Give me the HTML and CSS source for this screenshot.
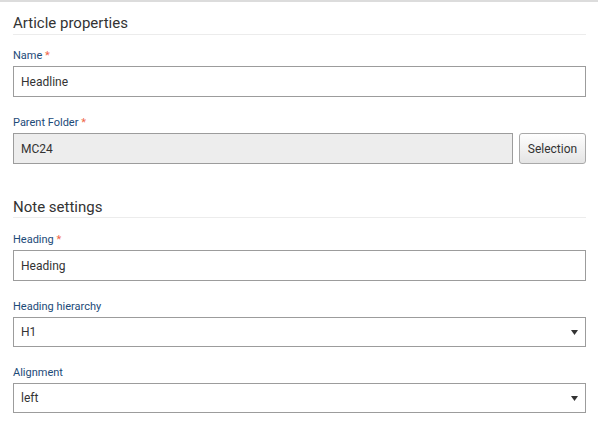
FILE: index.html
```html
<!DOCTYPE html>
<html lang="en">
<head>
<meta charset="utf-8">
<title>Article properties</title>
<link rel="stylesheet" href="styles.css">
</head>
<body>
<div class="page">
  <h2 class="section-title">Article properties</h2>
  <div class="field">
    <label class="label">Name <span class="req">*</span></label>
    <input class="input" type="text" value="Headline">
  </div>
  <div class="field">
    <label class="label">Parent Folder <span class="req">*</span></label>
    <div class="row">
      <input class="input input-readonly" type="text" value="MC24" readonly>
      <button class="btn" type="button">Selection</button>
    </div>
  </div>

  <h2 class="section-title section-second">Note settings</h2>
  <div class="field">
    <label class="label">Heading <span class="req">*</span></label>
    <input class="input" type="text" value="Heading">
  </div>
  <div class="field">
    <label class="label">Heading hierarchy</label>
    <div class="select-box">
      <select class="select"><option>H1</option><option>H2</option><option>H3</option></select>
      <svg class="arrow" width="7" height="5" viewBox="0 0 7 5"><path d="M0 0H7L3.5 5Z" fill="#333"/></svg>
    </div>
  </div>
  <div class="field">
    <label class="label">Alignment</label>
    <div class="select-box">
      <select class="select"><option>left</option><option>center</option><option>right</option></select>
      <svg class="arrow" width="7" height="5" viewBox="0 0 7 5"><path d="M0 0H7L3.5 5Z" fill="#333"/></svg>
    </div>
  </div>
</div>
</body>
</html>
```

FILE: styles.css
```css
html, body {
  margin: 0;
  padding: 0;
  background: #fff;
}
body {
  border-top: 2px solid #dcdcdc;
  font-family: Roboto, "Liberation Sans", Arial, sans-serif;
  color: #333;
}
.page {
  padding: 0 12px 20px 13px;
}
.section-title {
  margin: 12px 0 14px;
  padding: 0 0 2px;
  font-size: 15px;
  line-height: 18px;
  font-weight: 400;
  color: #333;
  border-bottom: 1px solid #ececec;
}
.section-second {
  margin-top: 34px;
  padding-bottom: 1px;
  margin-bottom: 15px;
}
.field + .field {
  margin-top: 19px;
}
.label {
  display: block;
  font-size: 11px;
  line-height: 13px;
  color: #1c4a78;
  margin-bottom: 4px;
}
.req {
  color: #f0674a;
}
.input {
  display: block;
  box-sizing: border-box;
  width: 100%;
  height: 31px;
  margin: 0;
  padding: 0 7px;
  border: 1px solid #9c9c9c;
  border-radius: 0;
  background: #fff;
  font-family: Roboto, "Liberation Sans", Arial, sans-serif;
  font-size: 12px;
  color: #333;
  outline: none;
}
.row {
  display: flex;
  gap: 6px;
}
.input-readonly {
  width: 500px;
  flex: none;
  background: #ededed;
}
.btn {
  flex: none;
  box-sizing: border-box;
  width: 67px;
  height: 31px;
  margin: 0;
  padding: 0;
  border: 1px solid #a9a9a9;
  border-radius: 3px;
  background: linear-gradient(#fefefe, #e4e4e4);
  font-family: Roboto, "Liberation Sans", Arial, sans-serif;
  font-size: 12px;
  color: #333;
}
.select-box {
  display: flex;
  align-items: center;
  box-sizing: border-box;
  height: 30px;
  border: 1px solid #9c9c9c;
  background: #fff;
  padding-right: 7px;
}
.select {
  flex: 1;
  -webkit-appearance: none;
  appearance: none;
  height: 100%;
  margin: 0;
  padding: 0 7px;
  border: none;
  background: transparent;
  font-family: Roboto, "Liberation Sans", Arial, sans-serif;
  font-size: 12px;
  color: #333;
  outline: none;
}
.arrow {
  flex: none;
  display: block;
}
```
